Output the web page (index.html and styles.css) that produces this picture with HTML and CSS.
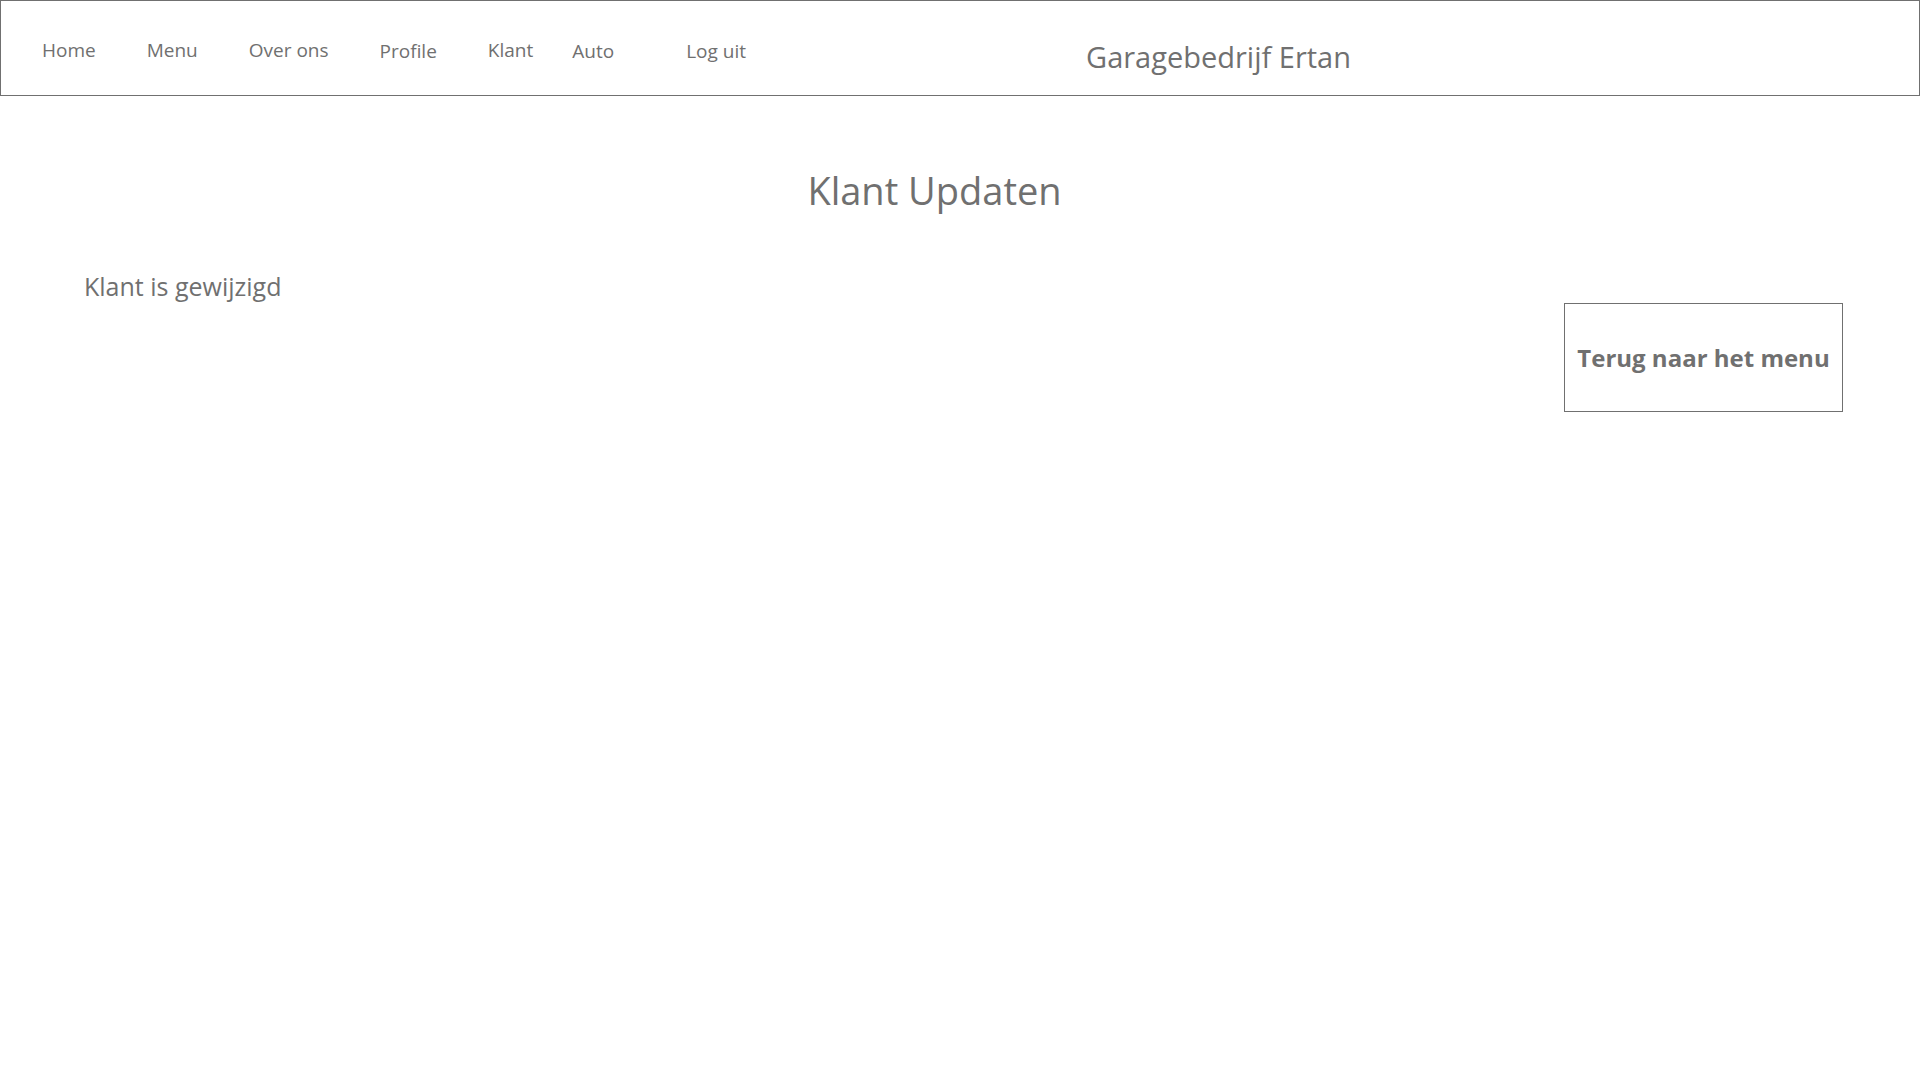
FILE: index.html
```html
<!DOCTYPE html>
<html lang="nl">
<head>
<meta charset="utf-8">
<title>Klant Updaten</title>
<link rel="stylesheet" href="styles.css">
</head>
<body>
<header class="topbar">
  <nav class="nav">
    <a class="nav-link" href="#">Home</a>
    <a class="nav-link" href="#">Menu</a>
    <a class="nav-link" href="#">Over ons</a>
    <a class="nav-link nav-link--low" href="#">Profile</a>
    <a class="nav-link" href="#">Klant</a>
    <a class="nav-link nav-link--tight nav-link--low" href="#">Auto</a>
    <a class="nav-link nav-link--wide nav-link--low" href="#">Log uit</a>
  </nav>
  <div class="brand">Garagebedrijf Ertan</div>
</header>
<main class="content">
  <h1 class="title">Klant Updaten</h1>
  <div class="row">
    <p class="message">Klant is gewijzigd</p>
    <a class="back-btn" href="#">Terug naar het menu</a>
  </div>
</main>
</body>
</html>
```
FILE: styles.css
```css
* { box-sizing: border-box; }
html, body { margin: 0; padding: 0; background: #fff; }
body {
  font-family: "Open Sans", "Noto Sans", sans-serif;
  color: #707070;
}
.topbar {
  height: 96px;
  border: 1px solid #707070;
  display: flex;
  align-items: center;
}
.nav {
  display: flex;
  align-items: center;
  gap: 51px;
  padding-left: 41px;
}
.nav-link {
  color: #707070;
  text-decoration: none;
  font-size: 19px;
  font-weight: 400;
  line-height: 1;
  position: relative;
  top: 2px;
}
.nav-link--low { top: 3px; }
.nav-link--tight { margin-left: -12px; }
.nav-link--wide { margin-left: 21px; }
.brand {
  margin-left: auto;
  margin-right: 568px;
  font-size: 29px;
  line-height: 1;
  position: relative;
  top: 8px;
}
.content {
  padding: 0 77px 0 84px;
}
.title {
  margin: 0;
  padding-top: 68px;
  text-align: center;
  padding-right: 58px;
  font-size: 38px;
  font-weight: 400;
  line-height: 52px;
}
.row {
  display: flex;
  justify-content: space-between;
  align-items: flex-start;
  margin-top: 53px;
}
.message {
  margin: 0;
  font-size: 25px;
  line-height: 34px;
}
.back-btn {
  margin-top: 34px;
  width: 279px;
  height: 109px;
  border: 1px solid #707070;
  display: flex;
  align-items: center;
  justify-content: center;
  color: #707070;
  text-decoration: none;
  font-size: 24px;
  font-weight: 700;
}
```
